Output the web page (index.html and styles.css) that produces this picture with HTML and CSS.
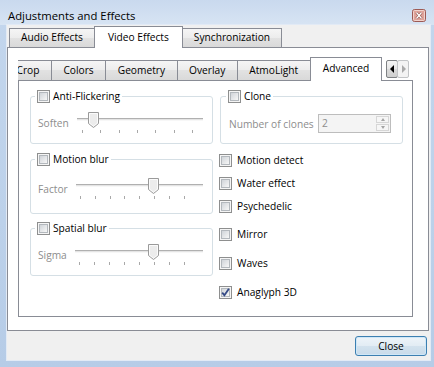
FILE: index.html
```html
<!DOCTYPE html>
<html lang="en">
<head>
    <meta charset="UTF-8">
    <meta name="viewport" content="width=device-width, initial-scale=1.0">
    <title>Adjustments and Effects</title>
    <link rel="stylesheet" href="styles.css">
</head>
<body>
    <div class="window">
        <div class="titlebar">
            <span class="title">Adjustments and Effects</span>
            <span class="title-close">
                <svg width="14" height="13" viewBox="0 0 14 13">
                    <rect x="0.5" y="0.5" width="13" height="12" rx="2" fill="#dfa39a" stroke="#9c5a55"/>
                    <rect x="1.5" y="1.5" width="11" height="10" rx="1" fill="none" stroke="#f1d3cd"/>
                    <path d="M4.5 3.5l5 6M9.5 3.5l-5 6" stroke="#8a4a45" stroke-width="2.6"/>
                    <path d="M4.5 3.5l5 6M9.5 3.5l-5 6" stroke="#fff" stroke-width="1.3"/>
                </svg>
            </span>
        </div>

        <div class="client">
            <div class="tabs outer-tabs">
                <div class="tab">Audio Effects</div>
                <div class="tab active">Video Effects</div>
                <div class="tab">Synchronization</div>
            </div>

            <div class="outer-pane">
                <div class="subtabs">
                    <div class="tabs strip">
                        <div class="tab cut">Crop</div>
                        <div class="tab">Colors</div>
                        <div class="tab">Geometry</div>
                        <div class="tab">Overlay</div>
                        <div class="tab">AtmoLight</div>
                        <div class="tab active">Advanced</div>
                    </div>
                    <div class="scroller">
                        <span class="scroll-btn">
                            <svg width="5" height="8" viewBox="0 0 5 8"><path d="M4 0v8L0 4z" fill="#000"/></svg>
                        </span>
                        <span class="scroll-btn disabled">
                            <svg width="5" height="8" viewBox="0 0 5 8"><path d="M1 0v8l4-4z" fill="#a9a9a9"/></svg>
                        </span>
                    </div>
                </div>

                <div class="inner-pane">
                    <!-- left column: the three filters with a slider -->
                    <div class="col">
                        <fieldset class="group">
                            <legend><span class="cb"></span>Anti-Flickering</legend>
                            <div class="slider-row">
                                <span class="dim">Soften</span>
                                <div class="slider">
                                    <div class="groove"></div>
                                    <svg class="thumb" style="left: 11px" width="11" height="16" viewBox="0 0 11 16">
                                        <path d="M0.5 0.5H10.5V11.5L5.5 15.5L0.5 11.5Z" fill="#ececec" stroke="#9a9a9a"/>
                                        <path d="M1.5 1.5H9.5V11L5.5 14.2L1.5 11Z" fill="none" stroke="#fbfbfb"/>
                                    </svg>
                                    <div class="ticks ticks-7"><i></i><i></i><i></i><i></i><i></i><i></i><i></i></div>
                                </div>
                            </div>
                        </fieldset>

                        <fieldset class="group tall">
                            <legend><span class="cb"></span>Motion blur</legend>
                            <div class="slider-row">
                                <span class="dim">Factor</span>
                                <div class="slider">
                                    <div class="groove"></div>
                                    <svg class="thumb" style="left: 72px" width="11" height="16" viewBox="0 0 11 16">
                                        <path d="M0.5 0.5H10.5V11.5L5.5 15.5L0.5 11.5Z" fill="#ececec" stroke="#9a9a9a"/>
                                        <path d="M1.5 1.5H9.5V11L5.5 14.2L1.5 11Z" fill="none" stroke="#fbfbfb"/>
                                    </svg>
                                    <div class="ticks ticks-8"><i></i><i></i><i></i><i></i><i></i><i></i><i></i><i></i></div>
                                </div>
                            </div>
                        </fieldset>

                        <fieldset class="group last">
                            <legend><span class="cb"></span>Spatial blur</legend>
                            <div class="slider-row">
                                <span class="dim">Sigma</span>
                                <div class="slider">
                                    <div class="groove"></div>
                                    <svg class="thumb" style="left: 73px" width="11" height="16" viewBox="0 0 11 16">
                                        <path d="M0.5 0.5H10.5V11.5L5.5 15.5L0.5 11.5Z" fill="#ececec" stroke="#9a9a9a"/>
                                        <path d="M1.5 1.5H9.5V11L5.5 14.2L1.5 11Z" fill="none" stroke="#fbfbfb"/>
                                    </svg>
                                    <div class="ticks ticks-8"><i></i><i></i><i></i><i></i><i></i><i></i><i></i><i></i></div>
                                </div>
                            </div>
                        </fieldset>
                    </div>

                    <!-- right column: clone + plain checkboxes -->
                    <div class="col">
                        <fieldset class="group clone">
                            <legend><span class="cb"></span>Clone</legend>
                            <div class="clone-row">
                                <span class="dim">Number of clones</span>
                                <div class="spin">
                                    <span class="spin-value">2</span>
                                    <span class="spin-btns">
                                        <span class="up"></span>
                                        <span class="down"></span>
                                    </span>
                                </div>
                            </div>
                        </fieldset>

                        <div class="checks">
                            <label class="check"><span class="cb"></span>Motion detect</label>
                            <label class="check"><span class="cb"></span>Water effect</label>
                            <label class="check"><span class="cb"></span>Psychedelic</label>
                        </div>

                        <div class="checks lower">
                            <label class="check"><span class="cb"></span>Mirror</label>
                            <label class="check"><span class="cb"></span>Waves</label>
                            <label class="check">
                                <span class="cb checked">
                                    <svg width="9" height="9" viewBox="0 0 9 9"><path d="M1.2 4.6L3.4 7.2L7.9 0.8" fill="none" stroke="#354a86" stroke-width="1.8"/></svg>
                                </span>Anaglyph 3D
                            </label>
                        </div>
                    </div>
                </div>
            </div>

            <div class="footer">
                <button type="button" class="btn">Close</button>
            </div>
        </div>
    </div>
</body>
</html>
```

FILE: styles.css
```css
* {
    box-sizing: border-box;
}

body {
    margin: 0;
    font-family: "Open Sans", "Noto Sans", sans-serif;
    font-size: 10.2px;
    color: #000;
    background: #fff;
}

.window {
    width: 434px;
    height: 367px;
    display: flex;
    flex-direction: column;
    background: linear-gradient(#c3d6ed, #bcd1ea 60%, #b6cce7);
}

/* title bar */
.titlebar {
    height: 25px;
    display: flex;
    justify-content: space-between;
    align-items: flex-start;
    padding: 8px 8px 0 8px;
    background: linear-gradient(#c9d9ee, #d7e4f3);
}

.title {
    font-size: 11.3px;
    line-height: 15px;
}

.title-close {
    display: flex;
    margin-top: 1px;
}

.client {
    flex: 1;
    margin: 0 4px 7px 7px;
    background: #f0f0f0;
    display: flex;
    flex-direction: column;
    box-shadow: 0 0 0 1px #e2eaf5;
}

/* tabs */
.tabs {
    display: flex;
    align-items: flex-end;
}

.tab {
    height: 19px;
    margin-bottom: 1px;
    margin-left: -1px;
    padding: 0 11px;
    line-height: 17px;
    white-space: nowrap;
    border: 1px solid #898c95;
    border-bottom: none;
    background: linear-gradient(#f5f5f5, #ececec 50%, #e2e2e2 50%, #d9d9d9);
}

.tab:first-child {
    margin-left: 0;
}

.tab.active {
    height: 22px;
    margin-bottom: 0;
    padding: 0 13px;
    line-height: 20px;
    background: #fff;
}

.outer-tabs {
    height: 23px;
    padding-left: 2px;
    margin-bottom: -1px;
    position: relative;
    z-index: 1;
}

.outer-pane {
    flex: 1;
    margin-right: 1px;
    background: #fff;
    border: 1px solid #898c95;
    padding: 9px 15px 13px 10px;
    display: flex;
    flex-direction: column;
}

.subtabs {
    height: 24px;
    margin-bottom: -1px;
    display: flex;
    position: relative;
    z-index: 1;
}

.strip {
    flex: 1;
    height: 24px;
    overflow: hidden;
}

.strip .tab {
    height: 20px;
    padding: 0 11.5px;
    line-height: 18px;
}

.strip .tab.active {
    height: 24px;
    padding: 0 12px;
    line-height: 21px;
}

.strip .tab.cut {
    margin-left: -14px;
}

.scroller {
    display: flex;
    align-self: flex-start;
    margin: 3px 4px 0 1px;
}

.scroll-btn {
    width: 12px;
    height: 18px;
    display: flex;
    align-items: center;
    justify-content: center;
    border: 1px solid #7e8184;
    border-radius: 2px;
    background: linear-gradient(#f4f4f4, #e6e6e6 50%, #dadada 50%, #cfcfcf);
}

.scroll-btn.disabled {
    margin-left: -1px;
    border-color: #c2c4c6;
    background: #f3f3f3;
}

.inner-pane {
    flex: 1;
    border: 1px solid #898c95;
    background: #fff;
    display: grid;
    grid-template-columns: 183px 183px;
    column-gap: 7px;
    align-items: start;
    padding: 8px 0 0 11px;
}

/* group boxes */
.group {
    margin: 0;
    min-width: 0;
    padding: 0 9px 10px 7px;
    border: 1px solid #d5dfe5;
    border-radius: 3px;
}

.group legend {
    display: flex;
    align-items: center;
    gap: 3px;
    margin-left: -3px;
    padding: 0 2px;
    line-height: 15px;
}

.group.tall {
    margin-top: 8px;
    padding-bottom: 14px;
}

.group.tall .slider-row {
    margin-top: 11px;
}

.group.last {
    margin-top: 7px;
}

.dim {
    color: #8d8d8d;
    white-space: nowrap;
}

/* sliders */
.slider-row {
    display: flex;
    gap: 8px;
    margin-top: 8px;
}

.slider-row .dim {
    line-height: 15px;
    margin-top: 4px;
}

.slider {
    flex: 1;
    position: relative;
    padding-top: 6px;
}

.groove {
    height: 3px;
    border-top: 1px solid #b0b0b0;
    border-bottom: 1px solid #f7f7f7;
    background: #e4e4e4;
}

.thumb {
    position: absolute;
    top: 0;
}

.ticks {
    display: flex;
    justify-content: space-between;
    margin-top: 9px;
}

.ticks i {
    width: 1px;
    height: 3px;
    background: #a9a9a9;
}

.ticks-7 {
    padding: 0 10px 0 5px;
}

.ticks-8 {
    padding: 0 18px 0 4px;
}

/* clone */
.clone {
    padding: 0 11px 10px 8px;
}

.clone-row {
    display: flex;
    align-items: center;
    margin-top: 10px;
}

.spin {
    display: flex;
    width: 73px;
    height: 19px;
    margin-left: auto;
    border: 1px solid #bdbdbd;
    background: #f4f4f4;
}

.spin-value {
    flex: 1;
    padding-left: 3px;
    line-height: 17px;
    color: #8d8d8d;
}

.spin-btns {
    width: 14px;
    display: flex;
    flex-direction: column;
    gap: 1px;
    padding: 1px 1px 1px 0;
}

.spin-btns span {
    flex: 1;
    display: flex;
    align-items: center;
    justify-content: center;
    border: 1px solid #d6d6d6;
    background: #f6f6f6;
}

.spin-btns .up::before,
.spin-btns .down::before {
    content: "";
    border-left: 2.5px solid transparent;
    border-right: 2.5px solid transparent;
}

.spin-btns .up::before {
    border-bottom: 3px solid #a4a4a4;
}

.spin-btns .down::before {
    border-top: 3px solid #a4a4a4;
}

/* plain checkboxes */
.checks {
    height: 61px;
    margin-top: 9px;
    display: flex;
    flex-direction: column;
    justify-content: space-between;
}

.checks.lower {
    height: 73px;
    margin-top: 13px;
}

.check {
    display: flex;
    align-items: center;
    gap: 5px;
    line-height: 15px;
    margin-left: -1px;
}

.cb {
    flex: none;
    display: grid;
    width: 13px;
    height: 13px;
    padding: 1px;
    border: 1px solid #8e8f8f;
    background: #f5f5f5;
}

.cb::before {
    content: "";
    grid-area: 1 / 1;
    border: 1px solid #b3b8bd;
    background: linear-gradient(135deg, #d0d4d9, #f7f7f7);
}

.cb svg {
    grid-area: 1 / 1;
}

/* footer */
.footer {
    height: 29px;
    display: flex;
    justify-content: flex-end;
    padding: 5px 3px 0 0;
}

.btn {
    width: 72px;
    height: 20px;
    padding: 0;
    font: inherit;
    color: #000;
    border: 1px solid #3c7fb1;
    border-radius: 3px;
    background: linear-gradient(#eef4f9, #e2ecf4 50%, #d3e2ee 50%, #c8dbea);
    box-shadow: inset 0 0 0 1px #cfe7f7;
}
```
